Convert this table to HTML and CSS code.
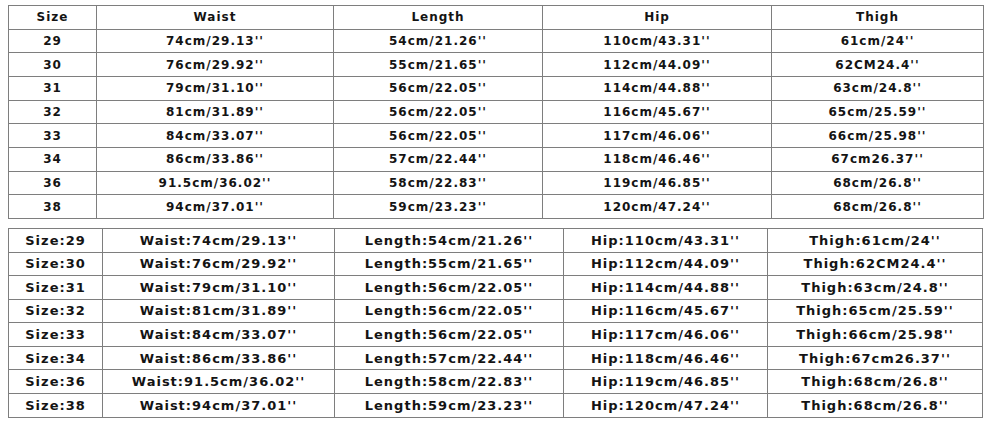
FILE: index.html
```html
<!DOCTYPE html>
<html>
<head>
<meta charset="utf-8">
<link rel="stylesheet" href="styles.css">
</head>
<body>
<div class="page">
<table class="chart chart-a">
<colgroup><col class="a1"><col class="a2"><col class="a3"><col class="a4"><col class="a5"></colgroup>
<tr><td>Size</td><td>Waist</td><td>Length</td><td>Hip</td><td>Thigh</td></tr>
<tr><td>29</td><td>74cm/29.13''</td><td>54cm/21.26''</td><td>110cm/43.31''</td><td>61cm/24''</td></tr>
<tr><td>30</td><td>76cm/29.92''</td><td>55cm/21.65''</td><td>112cm/44.09''</td><td>62CM24.4''</td></tr>
<tr><td>31</td><td>79cm/31.10''</td><td>56cm/22.05''</td><td>114cm/44.88''</td><td>63cm/24.8''</td></tr>
<tr><td>32</td><td>81cm/31.89''</td><td>56cm/22.05''</td><td>116cm/45.67''</td><td>65cm/25.59''</td></tr>
<tr><td>33</td><td>84cm/33.07''</td><td>56cm/22.05''</td><td>117cm/46.06''</td><td>66cm/25.98''</td></tr>
<tr><td>34</td><td>86cm/33.86''</td><td>57cm/22.44''</td><td>118cm/46.46''</td><td>67cm26.37''</td></tr>
<tr><td>36</td><td>91.5cm/36.02''</td><td>58cm/22.83''</td><td>119cm/46.85''</td><td>68cm/26.8''</td></tr>
<tr><td>38</td><td>94cm/37.01''</td><td>59cm/23.23''</td><td>120cm/47.24''</td><td>68cm/26.8''</td></tr>
</table>
<table class="chart chart-b">
<colgroup><col class="b1"><col class="b2"><col class="b3"><col class="b4"><col class="b5"></colgroup>
<tr><td>Size:29</td><td>Waist:74cm/29.13''</td><td>Length:54cm/21.26''</td><td>Hip:110cm/43.31''</td><td>Thigh:61cm/24''</td></tr>
<tr><td>Size:30</td><td>Waist:76cm/29.92''</td><td>Length:55cm/21.65''</td><td>Hip:112cm/44.09''</td><td>Thigh:62CM24.4''</td></tr>
<tr><td>Size:31</td><td>Waist:79cm/31.10''</td><td>Length:56cm/22.05''</td><td>Hip:114cm/44.88''</td><td>Thigh:63cm/24.8''</td></tr>
<tr><td>Size:32</td><td>Waist:81cm/31.89''</td><td>Length:56cm/22.05''</td><td>Hip:116cm/45.67''</td><td>Thigh:65cm/25.59''</td></tr>
<tr><td>Size:33</td><td>Waist:84cm/33.07''</td><td>Length:56cm/22.05''</td><td>Hip:117cm/46.06''</td><td>Thigh:66cm/25.98''</td></tr>
<tr><td>Size:34</td><td>Waist:86cm/33.86''</td><td>Length:57cm/22.44''</td><td>Hip:118cm/46.46''</td><td>Thigh:67cm26.37''</td></tr>
<tr><td>Size:36</td><td>Waist:91.5cm/36.02''</td><td>Length:58cm/22.83''</td><td>Hip:119cm/46.85''</td><td>Thigh:68cm/26.8''</td></tr>
<tr><td>Size:38</td><td>Waist:94cm/37.01''</td><td>Length:59cm/23.23''</td><td>Hip:120cm/47.24''</td><td>Thigh:68cm/26.8''</td></tr>
</table>
</div>
</body>
</html>
```
FILE: styles.css
```css
html, body {
  margin: 0;
  padding: 0;
  background: #ffffff;
}
.page {
  padding: 5px 0 0 8px;
  display: flex;
  flex-direction: column;
  gap: 9px;
}
.chart {
  border-collapse: collapse;
  table-layout: fixed;
  font-family: "DejaVu Sans", "Liberation Sans", sans-serif;
  font-weight: bold;
  color: #141414;
}
.chart td {
  border: 1px solid #7e7e7e;
  text-align: center;
  padding: 0;
  white-space: nowrap;
  overflow: hidden;
}
.chart-a {
  width: 975px;
  font-size: 12px;
  letter-spacing: 1px;
}
.chart-a tr { height: 23.67px; }
.chart-a .a1 { width: 88px; }
.chart-a .a2 { width: 237px; }
.chart-a .a3 { width: 209px; }
.chart-a .a4 { width: 229px; }
.chart-a .a5 { width: 212px; }
.chart-b {
  width: 974px;
  font-size: 13px;
  letter-spacing: 1px;
}
.chart-b tr { height: 23.6px; }
.chart-b .b1 { width: 94px; }
.chart-b .b2 { width: 232px; }
.chart-b .b3 { width: 229px; }
.chart-b .b4 { width: 204px; }
.chart-b .b5 { width: 215px; }
```
